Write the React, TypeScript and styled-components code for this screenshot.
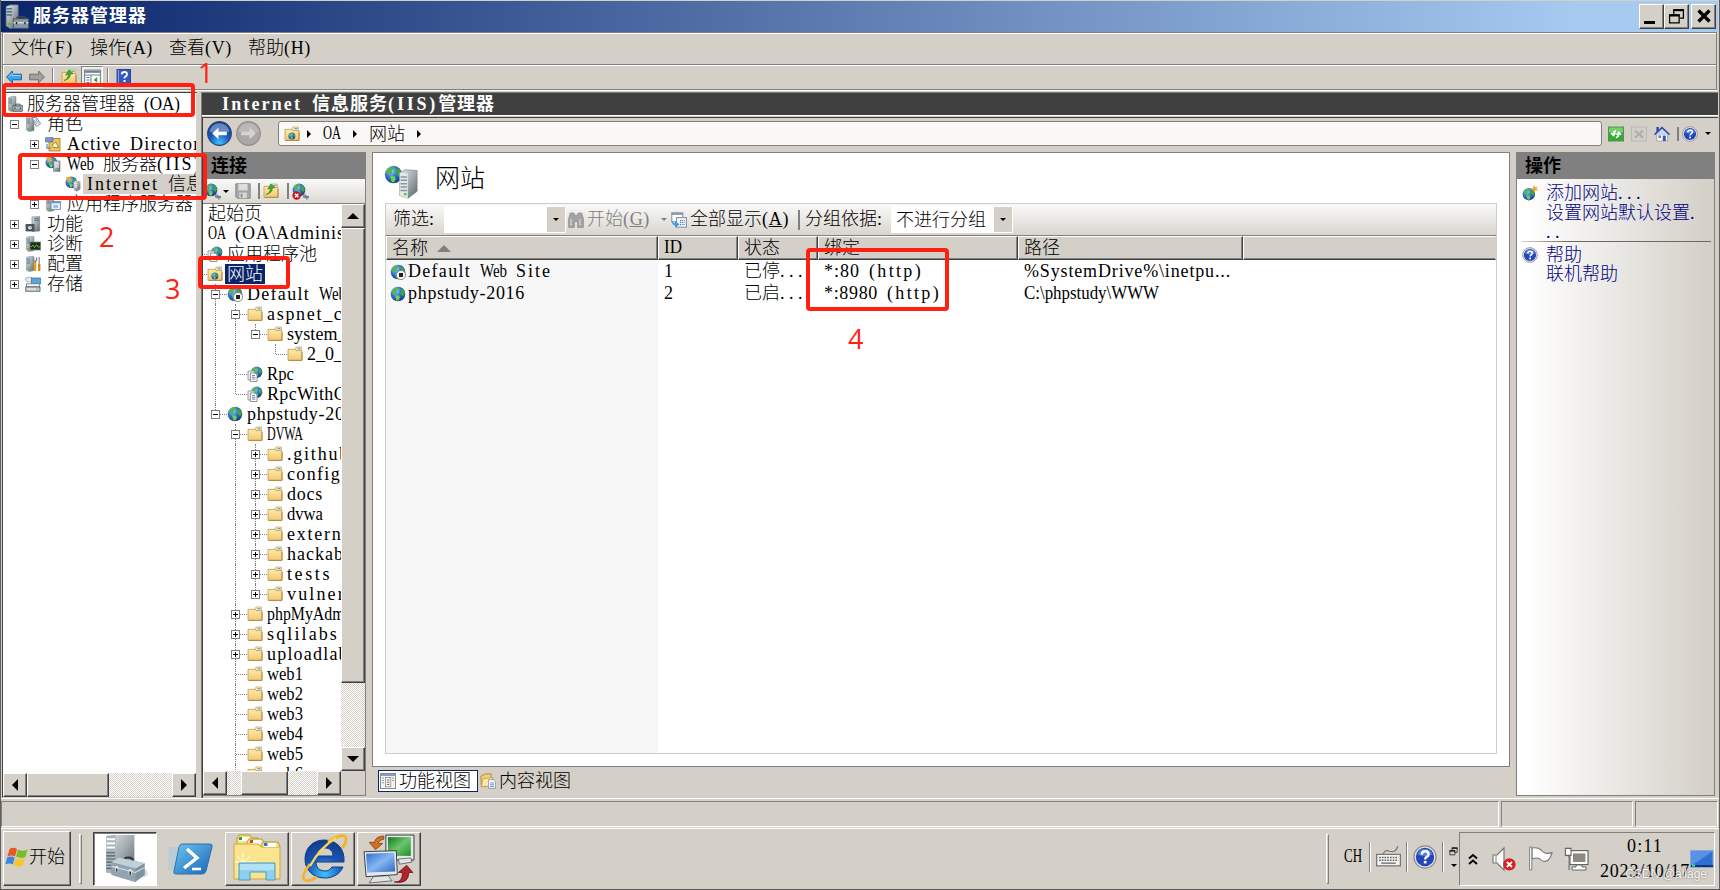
import React from "react";
import styled, { createGlobalStyle, css } from "styled-components";

const face = "#d4d0c8";
const shadow = "#808080";
const dark = "#404040";
const navy = "#0a246a";

const raised = css`
  background: ${face};
  border: 1px solid;
  border-color: #fff ${dark} ${dark} #fff;
  box-shadow: inset -1px -1px 0 ${shadow};
`;

/* ---------- text ---------- */

const ruler = document.createElement("canvas").getContext("2d")!;

// every latin letter gets a cell of half an em: narrow words are spaced out,
// wide ones are condensed
function fit(text: string, bold?: boolean): React.CSSProperties {
  ruler.font = `${bold ? 700 : 400} 100px "Liberation Serif"`;
  const natural = ruler.measureText(text).width / 100;
  const wanted = text.length * (bold ? 0.556 : 0.5);
  if (natural > wanted + 0.01) {
    return {
      display: "inline-block",
      letterSpacing: 0,
      transform: `scaleX(${(wanted / natural).toFixed(3)})`,
      marginRight: `${(wanted - natural).toFixed(3)}em`,
    };
  }
  return { letterSpacing: `${((wanted - natural) / text.length).toFixed(4)}em` };
}

function Txt({ children, bold }: { children: string; bold?: boolean }) {
  return (
    <Run>
      {children.split(/([\x21-\x7e]+| +)/).map((part, i) =>
        i % 2 ? (
          <Latin key={i} style={fit(part, bold)}>{part}</Latin>
        ) : (
          part
        )
      )}
    </Run>
  );
}

function Hotkey({ label, letter }: { label: string; letter: string }) {
  return (
    <Run>
      {label}
      <Latin style={fit(`(${letter})`)}>(<u>{letter}</u>)</Latin>
    </Run>
  );
}

const Run = styled.span`
  display: block;
  padding-bottom: 3px;
  line-height: 17px;
`;

const Latin = styled.span`
  font-family: "Liberation Serif", serif;
  transform-origin: 0 50%;
  white-space: pre;
`;

/* ---------- icons ---------- */

type IconProps = { size?: number };

const Svg = ({
  size = 16,
  box = 16,
  children,
}: IconProps & { box?: number; children: React.ReactNode }) => (
  <IconSvg width={size} height={size} viewBox={`0 0 ${box} ${box}`}>
    {children}
  </IconSvg>
);

const Defs = () => (
  <DefsSvg width="0" height="0">
    <defs>
      <radialGradient id="sea" cx="0.35" cy="0.3" r="0.8">
        <stop offset="0" stopColor="#a9d8fa" />
        <stop offset="0.45" stopColor="#2f74cf" />
        <stop offset="1" stopColor="#12327f" />
      </radialGradient>
      <linearGradient id="folder" x1="0" y1="0" x2="0" y2="1">
        <stop offset="0" stopColor="#ffeaa9" />
        <stop offset="1" stopColor="#efc873" />
      </linearGradient>
      <linearGradient id="steel" x1="0" y1="0" x2="1" y2="1">
        <stop offset="0" stopColor="#dfe5e8" />
        <stop offset="0.5" stopColor="#a3abb0" />
        <stop offset="1" stopColor="#59636a" />
      </linearGradient>
      <radialGradient id="orb" cx="0.5" cy="0.9" r="0.9">
        <stop offset="0" stopColor="#3fc3ff" />
        <stop offset="0.5" stopColor="#1b56b8" />
        <stop offset="1" stopColor="#123a86" />
      </radialGradient>
      <linearGradient id="screen" x1="0" y1="0" x2="1" y2="1">
        <stop offset="0" stopColor="#2f6dd0" />
        <stop offset="0.5" stopColor="#86b7f2" />
        <stop offset="1" stopColor="#2c67c4" />
      </linearGradient>
      <linearGradient id="green" x1="0" y1="0" x2="1" y2="1">
        <stop offset="0" stopColor="#0f7a1c" />
        <stop offset="0.5" stopColor="#6cc46d" />
        <stop offset="1" stopColor="#1f8f25" />
      </linearGradient>
      <linearGradient id="shell" x1="0" y1="0" x2="1" y2="1">
        <stop offset="0" stopColor="#6cc4ee" />
        <stop offset="1" stopColor="#1a66b8" />
      </linearGradient>
    </defs>
  </DefsSvg>
);

const EarthShape = () => (
  <>
    <circle cx="8" cy="8" r="7.3" fill="url(#sea)" />
    <path d="M2 5 Q4 1.6 8 1.2 L9 3 L6.5 4.5 L7 6.5 L4.5 8 L2.5 7.5 Z" fill="#4fb848" />
    <path d="M10 3 L13 3.4 L15 7 L13.5 10.5 L11.6 9 L10.2 7.6 L11 5.5 Z" fill="#3fa53c" />
    <path d="M5 9.5 L8.5 9.3 L10 11.3 L8.4 14.8 L6.3 14 Z" fill="#6fd04a" />
  </>
);

const Globe = ({ size }: IconProps) => (
  <Svg size={size}>
    <EarthShape />
  </Svg>
);

const GlobeStopped = ({ size }: IconProps) => (
  <Svg size={size}>
    <EarthShape />
    <circle cx="11" cy="11" r="4.6" fill="#f6f6f6" stroke="#777" strokeWidth="0.8" />
    <rect x="9" y="9" width="4" height="4" fill="#222" />
  </Svg>
);

const GlobeNew = () => (
  <Svg>
    <g transform="translate(0 2.4) scale(0.85)">
      <EarthShape />
    </g>
    <path d="M12 0 L13 2.2 L15.6 1.4 L14.4 3.6 L16 5.6 L13.4 5.4 L12 7.6 L11.2 5 L8.6 4.4 L10.8 3 Z" fill="#f6a623" />
  </Svg>
);

const GlobePlug = ({ stop }: { stop?: boolean }) => (
  <Svg size={17}>
    <path d="M9 9 L15 15" stroke="#9aa6ae" strokeWidth="3" />
    <path d="M10.5 13 H16" stroke="#6b7a84" strokeWidth="1.6" />
    <g transform="scale(0.82)">
      <EarthShape />
    </g>
    {stop && (
      <>
        <circle cx="4.4" cy="11.8" r="4" fill="#c4161c" />
        <path d="M2.8 10.2 L6 13.4 M6 10.2 L2.8 13.4" stroke="#fff" strokeWidth="1.4" />
      </>
    )}
  </Svg>
);

const FolderShape = () => (
  <>
    <path d="M8 2.6 L9 1 H14.4 V5 H8 Z" fill="#f6eac4" stroke="#b99650" strokeWidth="0.6" />
    <rect x="10.4" y="2" width="3" height="1.2" fill="#5aa5e6" />
    <path d="M1 3.4 H8 L9 4.6 H15 V14.4 H1 Z" fill="url(#folder)" stroke="#c39a4a" strokeWidth="0.8" />
    <path d="M15 6 V14.4 H2" stroke="#a8823a" strokeWidth="0.8" fill="none" />
  </>
);

const Folder = () => (
  <Svg>
    <FolderShape />
  </Svg>
);

const FolderGlobe = () => (
  <Svg>
    <FolderShape />
    <g transform="translate(4 6.2) scale(0.48)">
      <EarthShape />
    </g>
  </Svg>
);

const FolderUp = () => (
  <Svg>
    <FolderShape />
    <path d="M3 11.5 Q7.4 10 7.2 5 L4.6 6.2 L8 0.8 L12 4.6 L9.4 5 Q9.6 10 3 11.5 Z" fill="#43b02a" stroke="#1d6d12" strokeWidth="0.5" />
  </Svg>
);

const GlobePage = ({ pages }: { pages?: boolean }) => (
  <Svg>
    <g transform="translate(3.4 0) scale(0.78)">
      <EarthShape />
    </g>
    <path d="M1 5 H7.5 V14 H1 Z" fill="#f2f2f2" stroke="#888" strokeWidth="0.8" />
    <path d="M3.4 7 H8 L10 9 V15.5 H3.4 Z" fill="#fff" stroke="#777" strokeWidth="0.8" />
    {!pages && <path d="M5 9.5 H8 M5 11.3 H8.4 M5 13.1 H8.4" stroke="#3f6aa8" strokeWidth="0.8" />}
  </Svg>
);

const TowerShape = () => (
  <>
    <path d="M1.4 1.6 L4 0.6 H9 V14.6 L4 15.6 L1.4 14 Z" fill="url(#steel)" stroke="#7b858b" strokeWidth="0.5" />
    <path d="M1.8 3 H5 M1.8 5 H5 M1.8 7 H5" stroke="#4c6f86" strokeWidth="0.9" />
    <rect x="2.2" y="12" width="2" height="1.4" fill="#54c13c" />
  </>
);

const ServerBox = ({ size }: IconProps) => (
  <Svg size={size}>
    <TowerShape />
    <path d="M8 9.5 Q8 8 11 8 Q14 8 14 9.5" fill="none" stroke="#3c464c" strokeWidth="0.9" />
    <rect x="6" y="9.5" width="9.6" height="6" fill="#8d9aa3" stroke="#4e5a62" strokeWidth="0.6" />
    <path d="M6 12 H15.6" stroke="#d8e0e4" strokeWidth="0.8" />
    <path d="M8 11.5 V13 M13.4 11.5 V13" stroke="#222" strokeWidth="0.9" />
  </Svg>
);

const ServerPages = () => (
  <Svg>
    <TowerShape />
    <path d="M7 2.4 L11 1 L15.6 7.6 L11.5 10.5 Z" fill="#e9f0f6" stroke="#5d7182" strokeWidth="0.8" />
    <path d="M9.2 4 L12 8 M10.8 3.2 L13.6 7.2" stroke="#6f9cc4" strokeWidth="0.8" />
  </Svg>
);

const Directory = () => (
  <Svg>
    <rect x="4" y="2.5" width="11" height="12.5" fill="#f0c65a" stroke="#8b6a1e" strokeWidth="0.7" />
    <path d="M0.6 1.6 H8 V6 H0.6 Z" fill="#7f97c9" stroke="#405a94" strokeWidth="0.6" />
    <path d="M7 9 L11 6 L13.5 11.5 H8.6 Z" fill="#fff3c4" stroke="#6c5210" strokeWidth="0.6" />
    <path d="M2 8 V12 H6" stroke="#7a8aa6" strokeWidth="1.3" fill="none" />
  </Svg>
);

const ServerGlobe = ({ size }: IconProps) => (
  <Svg size={size}>
    <g transform="scale(0.56)">
      <EarthShape />
    </g>
    <path d="M7.4 3.6 L10 2.2 L15.6 2.6 V12.4 L11.4 15.6 L7.4 14.4 Z" fill="url(#steel)" stroke="#7b858b" strokeWidth="0.3" />
    <path d="M7.4 3.6 L11.2 4 V15.6 L7.4 14.4 Z" fill="#e3e7e9" />
    <path d="M7.8 5.6 H10.8 M7.8 7.2 H10.8 M7.8 8.8 H10.8 M7.8 10.4 H10.8 M7.8 12 H10.8" stroke="#8a959c" strokeWidth="0.7" />
    <rect x="9.4" y="13.2" width="1.2" height="1" fill="#44d02c" />
  </Svg>
);

const WebManager = () => (
  <Svg>
    <g transform="scale(0.8)">
      <EarthShape />
    </g>
    <path d="M1 1.5 L5 0.6 L7 5 L3 6 Z" fill="#e9a93a" />
    <path d="M8.6 6 L11 4.6 L15.4 5.4 V13 L12 15.6 L8.6 14 Z" fill="url(#steel)" />
    <path d="M9.4 7.4 H12 M9.4 9.2 H12 M9.4 11 H12" stroke="#fff" strokeWidth="0.9" />
  </Svg>
);

const WebServer = () => (
  <Svg>
    <g transform="scale(0.8)">
      <EarthShape />
    </g>
    <path d="M1 1.5 L5 0.6 L7 5 L3 6 Z" fill="#e9a93a" />
    <path d="M8.6 5 H15 V15.4 H8.6 Z" fill="url(#steel)" stroke="#68747b" strokeWidth="0.6" />
    <path d="M9.6 7 H14 M9.6 9 H14 M9.6 11 H14" stroke="#fff" strokeWidth="0.9" />
    <rect x="12" y="13" width="2" height="1.2" fill="#44d02c" />
  </Svg>
);

const AppServer = () => (
  <Svg>
    <TowerShape />
    <rect x="6" y="5.5" width="9.6" height="8" fill="#e9eef5" stroke="#6d86a5" strokeWidth="0.8" />
    <path d="M6 6.6 H15.6" stroke="#6d9bd0" strokeWidth="1.4" />
    <rect x="8.4" y="9" width="4.6" height="3" fill="#9ebfe4" />
  </Svg>
);

const Features = () => (
  <Svg>
    <path d="M7 1 L14.6 0.6 V15 L7 15.4 Z" fill="url(#steel)" stroke="#68747b" strokeWidth="0.6" />
    <path d="M9 2.6 H14 M9 4.4 H14" stroke="#4c6f86" strokeWidth="0.9" />
    <rect x="0.6" y="8" width="9" height="7.4" fill="#4d585f" />
    <circle cx="5" cy="11.7" r="2.4" fill="#fff" stroke="#222" strokeWidth="0.8" />
    <path d="M5 10.3 V11.8 H6.2" stroke="#222" strokeWidth="0.6" fill="none" />
  </Svg>
);

const Diagnostics = () => (
  <Svg>
    <TowerShape />
    <rect x="5" y="6" width="10.6" height="8" fill="#1c2b1c" stroke="#7b858b" strokeWidth="0.8" />
    <path d="M6 11 L8 9 L9.6 11.6 L11.6 8.6 L13 11 H15" stroke="#6de04c" strokeWidth="0.8" fill="none" />
  </Svg>
);

const Config = () => (
  <Svg>
    <TowerShape />
    <path d="M8.4 1.4 V4.4 L10 5.6 L11.6 4.4 V1.4" stroke="#7b858b" strokeWidth="1.3" fill="none" />
    <path d="M10 6 V15" stroke="#e89a1a" strokeWidth="2.6" />
    <path d="M14.2 1 V8" stroke="#7b858b" strokeWidth="1.1" />
    <path d="M14.2 8 V15" stroke="#d4881a" strokeWidth="2.4" />
  </Svg>
);

const Storage = () => (
  <Svg>
    <ellipse cx="4.4" cy="3.6" rx="3.8" ry="2.4" fill="#e8edf1" stroke="#7b858b" strokeWidth="0.6" />
    <rect x="6.4" y="2" width="9" height="6" fill="#58a6d8" stroke="#3a6e94" strokeWidth="0.7" />
    <rect x="1.4" y="7.8" width="13" height="3" fill="#f1f3f5" stroke="#68747b" strokeWidth="0.7" />
    <rect x="0.8" y="11" width="14.2" height="4.2" fill="#d7dce0" stroke="#3e474d" strokeWidth="0.8" />
    <rect x="11.4" y="12.4" width="2" height="1.2" fill="#44d02c" />
  </Svg>
);

const ArrowLeft = () => (
  <Svg>
    <path d="M0.6 8 L6.4 2 V5.2 H15.4 V10.8 H6.4 V14 Z" fill="#39a5ea" stroke="#155a9a" strokeWidth="0.9" />
    <path d="M3 7.6 L6 4.6 V6.6 H14.6" stroke="#a5dcfb" strokeWidth="0.9" fill="none" />
  </Svg>
);

const ArrowRight = () => (
  <Svg>
    <path d="M15.4 8 L9.6 2 V5.2 H0.6 V10.8 H9.6 V14 Z" fill="#a0a0a0" stroke="#6a6a6a" strokeWidth="0.9" />
  </Svg>
);

const ConsoleTree = () => (
  <Svg size={17}>
    <rect x="0.6" y="1" width="14.8" height="14" fill="#fff" stroke="#72808c" />
    <path d="M1 2.6 H15" stroke="#72808c" strokeWidth="2" />
    <path d="M1 5.6 H15 M6.6 6 V15" stroke="#72808c" />
    <path d="M2.4 8 H5 M2.4 10.4 H5 M2.4 12.8 H5" stroke="#3c70b8" />
    <path d="M12.4 7.6 V13 L9 10.3 Z" fill="#35a52c" />
  </Svg>
);

const HelpBook = () => (
  <Svg>
    <rect x="1" y="0.5" width="13.5" height="15" fill="#3557c0" stroke="#1c2f7c" strokeWidth="0.8" />
    <path d="M2.4 1 V15" stroke="#8fa8ee" />
    <path d="M5.6 5.4 Q5.8 3 8.4 3 Q11 3 11 5.2 Q11 6.8 9.4 7.6 Q8.4 8.2 8.4 9.6" fill="none" stroke="#fff" strokeWidth="1.8" />
    <rect x="7.5" y="11" width="2" height="2" fill="#fff" />
  </Svg>
);

const HelpCircle = ({ size }: IconProps) => (
  <Svg size={size}>
    <circle cx="8" cy="8" r="7.4" fill="#e2e2e6" stroke="#8c8c94" strokeWidth="0.8" />
    <circle cx="8" cy="8" r="6.1" fill="#2347b8" />
    <path d="M3 6.4 A5.2 5.2 0 0 1 13 6.4 Q8 8.6 3 6.4 Z" fill="#7094e6" opacity="0.7" />
    <path d="M5.8 6.4 Q5.9 4.2 8.1 4.2 Q10.4 4.2 10.4 6.1 Q10.4 7.4 9 8 Q8.1 8.5 8.1 9.6" fill="none" stroke="#fff" strokeWidth="1.6" />
    <rect x="7.2" y="10.6" width="1.8" height="1.7" fill="#fff" />
  </Svg>
);

const NavOrb = ({ forward }: { forward?: boolean }) => (
  <Svg size={25} box={24}>
    <circle cx="12" cy="12" r="11.4" fill={forward ? "#a9a8a5" : "url(#orb)"} stroke={forward ? "#8d8c89" : "#2c4472"} />
    <path d="M2.4 10 A9.8 9.8 0 0 1 21.6 10 Q12 13 2.4 10 Z" fill="#fff" opacity={forward ? 0.2 : 0.35} />
    <path
      d="M5 12 L11 6.4 V10.4 H19 V13.6 H11 V17.6 Z"
      fill={forward ? "#d6d4d0" : "#fff"}
      transform={forward ? "rotate(180 12 12)" : undefined}
    />
  </Svg>
);

const Refresh = () => (
  <Svg>
    <rect x="0.5" y="1" width="15" height="14" fill="#2dae2f" stroke="#5c8a5c" />
    <rect x="1" y="1.5" width="14" height="5" fill="#8be07f" opacity="0.7" />
    <path d="M3 7 L5.4 9.6 L7.6 7 M5.3 9 Q5 5.6 8 4.8 M8.4 8.8 L10.8 6.2 L13 8.8 M10.7 7 Q11 11 7.8 11.6" stroke="#fff" strokeWidth="1.6" fill="none" />
  </Svg>
);

const StopLoad = () => (
  <Svg>
    <rect x="0.5" y="1" width="15" height="14" fill="#d0cecb" stroke="#b9b7b3" />
    <path d="M4 4.6 L12 11.8 M12 4.6 L4 11.8" stroke="#b0aeab" strokeWidth="2.2" />
  </Svg>
);

const Home = () => (
  <Svg>
    <rect x="2.4" y="1" width="2.4" height="5" fill="#2d49a6" />
    <path d="M2.6 8 H13.6 V15 H2.6 Z" fill="#f5f5f7" stroke="#8a90a8" strokeWidth="0.7" />
    <path d="M0.6 8.6 L8 1.6 L15.6 8.6" fill="#c9d4f2" stroke="#33499e" strokeWidth="1.5" />
    <rect x="8.8" y="9.6" width="3" height="5.4" fill="#2e5db0" />
    <rect x="4.4" y="9.4" width="2.6" height="2.6" fill="#7b8190" />
  </Svg>
);

const Disk = () => (
  <Svg>
    <path d="M0.8 0.8 H15.2 V15.2 H2.2 L0.8 13.8 Z" fill="#a5a5a5" stroke="#8a8a8a" />
    <rect x="3.4" y="1" width="9.2" height="6.4" fill="#dedede" />
    <rect x="4.4" y="9.6" width="7.4" height="5.4" fill="#dadada" />
    <rect x="5.6" y="10.8" width="2" height="3.6" fill="#8e8e8e" />
  </Svg>
);

const Binoculars = () => (
  <Svg>
    <path d="M0.6 7 L2.2 1 H6 L7 3.6 H9 L10 1 H13.8 L15.4 7 V15.4 H9.6 V9.4 H6.4 V15.4 H0.6 Z" fill="#a3a3a3" stroke="#8a8a8a" strokeWidth="0.7" />
    <path d="M3 7 V13.6 M12 7 V13.6" stroke="#d0d0d0" strokeWidth="1.4" />
  </Svg>
);

const ShowAll = () => (
  <Svg>
    <rect x="0.8" y="0.8" width="11" height="9" fill="#fff" stroke="#7d8ba0" />
    <path d="M0.8 2 H11.8" stroke="#7d8ba0" strokeWidth="1.6" />
    <rect x="5.4" y="5.6" width="10" height="9.6" fill="#f4f8fd" stroke="#7d8ba0" />
    <path d="M9 8.6 H14 M9 10.6 H14 M9 12.6 H14" stroke="#3c62a8" strokeDasharray="1.2 1" />
    <path d="M1 7 Q1 11.4 4 11.4 V9 L8.6 12.4 L4 15.4 V13.4 Q0 13 1 7 Z" fill="#2f9fe0" />
  </Svg>
);

const FeatureView = () => (
  <Svg>
    <rect x="0.5" y="0.5" width="15" height="15" fill="#f4f4f2" stroke="#8a8a8a" />
    <path d="M1 2 H15" stroke="#8ca0bc" strokeWidth="2" />
    <path d="M2 5 H4 M2 7.4 H4 M2 9.8 H4 M12 5 H14 M12 7.4 H14" stroke="#9a9a9a" />
    <rect x="5.4" y="4.4" width="5.4" height="9.4" fill="#fff" stroke="#8a8a8a" strokeWidth="0.8" />
    <path d="M6.8 7 H9.6 M6.8 9.2 H9.6 M6.8 11.4 H9.6" stroke="#444" strokeWidth="0.8" />
  </Svg>
);

const ContentView = () => (
  <Svg>
    <path d="M0.8 3 L6 0.8 H11 V4 L13 5 L10.6 13.6 H1.4 Z" fill="#efcb7c" stroke="#a98133" strokeWidth="0.8" />
    <path d="M3 6 L13 4.4 L11 13.4 H1.4 Z" fill="#ffe6a3" stroke="#b78f3e" strokeWidth="0.6" />
    <path d="M8.6 6.6 H13.4 L15.4 8.6 V15.4 H8.6 Z" fill="#fff" stroke="#7d8ba0" strokeWidth="0.8" />
    <path d="M10 10 H14 M10 11.8 H14 M10 13.6 H14" stroke="#3a75c4" strokeWidth="0.8" />
  </Svg>
);

const WindowsFlag = () => (
  <Svg size={24} box={24}>
    <path d="M4.4 4.2 Q8 1.4 12 4 L10 11.4 Q6.4 9.4 2.4 11.6 Z" fill="#e8562a" />
    <path d="M13 4.6 Q17.4 7 22.6 4.4 L20.4 12 Q15.6 14 11 11.6 Z" fill="#7cbc2c" />
    <path d="M2 12.6 Q6 10.6 9.8 12.6 L7.8 19.6 Q4 17.6 0.4 19.6 Z" fill="#3f86d8" />
    <path d="M10.8 13 Q15.4 15.4 20 13.2 L18 20.4 Q13.4 22.8 8.8 20.2 Z" fill="#f8c52c" />
  </Svg>
);

const ToolboxLarge = () => (
  <Svg size={50} box={48}>
    <path d="M37 42 Q48 42 45 35 L39 32 Z" fill="#d8d8d8" />
    <path d="M6 2 L14 1 H33 V32 L16 38 L6 37 Z" fill="url(#steel)" />
    <path d="M6 2 L15 1 V38 L6 37 Z" fill="#a6b3bb" />
    <path d="M6.5 5 H14.5 M6.5 9 H14.5 M6.5 13 H14.5" stroke="#fff" strokeWidth="2" />
    <path d="M6 18 H14.5 M6 21 H14.5 M6 24 H14.5 M6 27 H14.5 M6 30 H14.5 M6 33 H14.5" stroke="#56636b" />
    <path d="M22 27 Q23 22 28 22.6 Q32 23 32 27" fill="none" stroke="#333" strokeWidth="1.8" />
    <path d="M11 27 L18 22.6 L43 28 V39 L34 46 L11 39 Z" fill="#7e929f" />
    <path d="M11 27 L18 22.6 L43 28 L34 33 Z" fill="#c3d0d8" />
    <path d="M11 27 L34 33 V46 L11 39 Z" fill="#91a4b0" />
    <path d="M11 31 L34 37 L43 32" stroke="#dbe4ea" fill="none" />
    <path d="M16 31 V36 M29 34 V39" stroke="#e8edf0" strokeWidth="3" />
    <path d="M16 33 V36 M29 36 V39" stroke="#333" strokeWidth="1.6" />
  </Svg>
);

const PowerShell = () => (
  <Svg size={46} box={46}>
    <path d="M1 11 H10 L5 34 H0 Z" fill="#8ec8ea" opacity="0.4" />
    <path d="M14 8 H42 Q45 8 44 11 L38 35 Q37 38 34 38 H8 Q5 38 6 35 L11 11 Q12 8 14 8 Z" fill="url(#shell)" stroke="#2c70aa" />
    <path d="M19 13 L29 22 L16 32" fill="none" stroke="#fff" strokeWidth="3.4" />
    <path d="M24 33 H33" stroke="#fff" strokeWidth="2.6" />
  </Svg>
);

const Explorer = () => (
  <Svg size={50} box={50}>
    <path d="M5 4 L7 1 H18 L20 4 H26 V20 H5 Z" fill="#f6e08c" stroke="#b99a3c" />
    <rect x="7" y="3" width="10" height="4" fill="#fff" />
    <rect x="7" y="3" width="3" height="3" fill="#29a23a" />
    <path d="M15 8 L17 5 H30 L32 8 H38 V20 H15 Z" fill="#f6e08c" stroke="#b99a3c" />
    <rect x="18" y="6" width="11" height="4" fill="#fff" />
    <rect x="18" y="6" width="3" height="3" fill="#d9481c" />
    <path d="M2 10 H26 L29 13 H48 V45 H2 Z" fill="#fbe48e" stroke="#c8a748" />
    <path d="M29 12 L31 8 H46 L48 13" fill="#f6e08c" stroke="#b99a3c" />
    <rect x="32" y="9" width="12" height="4" fill="#fff" />
    <rect x="32" y="9" width="3.5" height="3" fill="#2b76cc" />
    <path d="M11 17 V40 M3 28 H24 M5 22 L18 35 M18 22 L5 35" stroke="#fffbe0" strokeWidth="1" />
    <path d="M7 29 H43 V46 H34 V38 H18 V46 H7 Z" fill="#8fd0ee" stroke="#4b9cc8" />
    <path d="M8 30 H42 V36 H8 Z" fill="#bfe8f8" opacity="0.7" />
  </Svg>
);

const IE = () => (
  <Svg size={50} box={50}>
    <path
      d="M26 6 C15 6 7 14 7 25 C7 37 16 44 27 44 C35 44 42 40 45 33 H34 C32 36 30 37 27 37 C21 37 18 33 18 28 H46 C47 15 39 6 26 6 Z M18 22 C19 17 22 14 27 14 C32 14 35 17 35 22 Z"
      fill="url(#orb)"
      fillRule="evenodd"
      stroke="#0c3f8c"
      strokeWidth="1"
    />
    <path d="M12 30 C1 44 4 52 19 43 M30 8 C40 1 49 -1 48 6 C48 9 46 12 44 14" fill="none" stroke="#f3b42c" strokeWidth="2.8" />
    <path d="M12 32 C17 23 26 11 38 4" fill="none" stroke="#f9d460" strokeWidth="2.4" />
  </Svg>
);

const Monitors = () => (
  <Svg size={52} box={50}>
    <path d="M22 2 H49 V26 H22 Z" fill="#e4e9ee" stroke="#222" strokeWidth="0.8" />
    <path d="M24 4 H46 V22 H24 Z" fill="url(#green)" />
    <path d="M34 25 L46 24 L47 28 L35 30 Z" fill="#dfe4e8" stroke="#333" strokeWidth="0.6" />
    <path d="M1 18 L32 17 L33 40 L3 42 Z" fill="#e4e9ee" stroke="#222" strokeWidth="0.8" />
    <path d="M3 20 L30 19 L31 37 L4 38 Z" fill="url(#screen)" />
    <path d="M10 42 L24 41 L28 46 L6 48 Z" fill="#dfe4e8" stroke="#333" strokeWidth="0.6" />
    <path d="M20 3 Q12 3 11 9 H6 L12 16 L19 10 H15 Q15 7 20 6 Z" fill="#d46f22" stroke="#7a3b0c" strokeWidth="0.7" />
    <path d="M30 47 Q38 48 38 38 H34 L42 31 L48 38 H44 Q44 50 30 47 Z" fill="#b0242c" stroke="#5e0c12" strokeWidth="0.7" />
  </Svg>
);

const Keyboard = () => (
  <Svg size={25} box={24}>
    <path d="M7 9 Q8 4 13 6 Q19 8 21 1" fill="none" stroke="#777" strokeWidth="1.2" />
    <rect x="0.6" y="9" width="22.8" height="11" fill="#f2f2f0" stroke="#777" strokeWidth="1.2" />
    <path d="M3 12 H21.4 M3 14.6 H21.4" stroke="#666" strokeWidth="1.5" strokeDasharray="1.6 1" />
    <path d="M5 17.4 H19" stroke="#666" strokeWidth="1.2" />
  </Svg>
);

const Speaker = () => (
  <Svg size={26} box={26}>
    <path d="M2 9 H6 L13 2 V24 L6 17 H2 Z" fill="#fafafa" stroke="#777" strokeWidth="1.2" />
    <path d="M5 9 V17" stroke="#888" />
    <circle cx="18.4" cy="18.4" r="6.2" fill="#d81e1e" />
    <path d="M15.8 15.8 L21 21 M21 15.8 L15.8 21" stroke="#fff" strokeWidth="1.9" />
  </Svg>
);

const Flag = () => (
  <Svg size={25} box={25}>
    <path d="M4 2 Q10 1 13 4 Q17 9 24 6.6 Q23 11 20 14.4 Q15 17 12 13 Q8 11 4 13 Z" fill="#fff" stroke="#777" strokeWidth="1.2" />
    <path d="M1.6 1 H3.8 V24 H1.6 Z" fill="#fff" stroke="#777" strokeWidth="0.9" />
  </Svg>
);

const Network = () => (
  <Svg size={25} box={25}>
    <rect x="6" y="4.6" width="18" height="14" fill="#fff" stroke="#666" strokeWidth="1.2" />
    <rect x="9" y="7.4" width="12.4" height="8.6" fill="#8d8a82" />
    <path d="M12 19 H18 V21 H22 V24 H8 V21 H12 Z" fill="#fff" stroke="#666" strokeWidth="1" />
    <path d="M1.4 2.4 H7 V9.4 H1.4 Z M3.4 10 H5 V24" fill="#fff" stroke="#666" strokeWidth="1.1" />
  </Svg>
);

const ShowDesktop = () => (
  <Svg size={24} box={24}>
    <rect x="0.5" y="3.5" width="22.5" height="17" fill="#2d6fd2" stroke="#7ea9e4" />
    <path d="M1 4 H23 L1 19 Z" fill="#8dbcf5" opacity="0.45" />
    <path d="M1 19 H23" stroke="#16376e" strokeWidth="2" />
    <rect x="2" y="17.6" width="3" height="2" fill="#5ee05e" />
  </Svg>
);

const Restore = ({ size = 16 }: IconProps) => (
  <Svg size={size}>
    <path d="M5.5 6 V1.5 H14.5 V9.5 H11" fill="none" stroke="#000" strokeWidth="1.2" />
    <path d="M5 2 H15" stroke="#000" strokeWidth="2" />
    <path d="M1.5 6.5 H10.5 V14 H1.5 Z" fill={face} stroke="#000" strokeWidth="1.2" />
    <path d="M1 7 H11" stroke="#000" strokeWidth="2" />
  </Svg>
);

/* ---------- data ---------- */

type ServerNode = {
  label: string;
  depth: number;
  icon: React.ReactNode;
  box?: "+" | "-";
  selected?: boolean;
};

const serverTree: ServerNode[] = [
  { label: "角色", depth: 0, icon: <ServerPages />, box: "-" },
  { label: "Active Directory", depth: 1, icon: <Directory />, box: "+" },
  { label: "Web 服务器(IIS)", depth: 1, icon: <WebServer />, box: "-" },
  { label: "Internet 信息服务", depth: 2, icon: <WebManager />, selected: true },
  { label: "应用程序服务器", depth: 1, icon: <AppServer />, box: "+" },
  { label: "功能", depth: 0, icon: <Features />, box: "+" },
  { label: "诊断", depth: 0, icon: <Diagnostics />, box: "+" },
  { label: "配置", depth: 0, icon: <Config />, box: "+" },
  { label: "存储", depth: 0, icon: <Storage />, box: "+" },
];

// guides: one character per indent cell ("|" line, "t" branch, "l" last branch)
type SiteNode = { label: string; guides: string; box?: "+" | "-"; icon?: React.ReactNode };

const siteTree: SiteNode[] = [
  { label: "Default Web Site", guides: "t", box: "-", icon: <GlobeStopped /> },
  { label: "aspnet_client", guides: "|t", box: "-" },
  { label: "system_web", guides: "||l", box: "-" },
  { label: "2_0_50727", guides: "|| l" },
  { label: "Rpc", guides: "|t", icon: <GlobePage /> },
  { label: "RpcWithCert", guides: "|l", icon: <GlobePage /> },
  { label: "phpstudy-2016", guides: "l", box: "-", icon: <Globe /> },
  { label: "DVWA", guides: " t", box: "-" },
  { label: ".github", guides: " |t", box: "+" },
  { label: "config", guides: " |t", box: "+" },
  { label: "docs", guides: " |t", box: "+" },
  { label: "dvwa", guides: " |t", box: "+" },
  { label: "external", guides: " |t", box: "+" },
  { label: "hackable", guides: " |t", box: "+" },
  { label: "tests", guides: " |t", box: "+" },
  { label: "vulnerabilities", guides: " |l", box: "+" },
  { label: "phpMyAdmin", guides: " t", box: "+" },
  { label: "sqlilabs", guides: " t", box: "+" },
  { label: "uploadlabs", guides: " t", box: "+" },
  { label: "web1", guides: " t" },
  { label: "web2", guides: " t" },
  { label: "web3", guides: " t" },
  { label: "web4", guides: " t" },
  { label: "web5", guides: " t" },
  { label: "web6", guides: " t" },
];

const sites = [
  { name: "Default Web Site", id: "1", state: "已停...", binding: "*:80 (http)", path: "%SystemDrive%\\inetpu...", icon: <GlobeStopped /> },
  { name: "phpstudy-2016", id: "2", state: "已启...", binding: "*:8980 (http)", path: "C:\\phpstudy\\WWW", icon: <Globe /> },
];

const marks = [
  { x: 2, y: 83, w: 193, h: 34 },
  { x: 18, y: 153, w: 189, h: 47 },
  { x: 198, y: 256, w: 92, h: 33 },
  { x: 806, y: 248, w: 143, h: 63 },
];

const steps = [
  { n: "1", x: 198, y: 55 },
  { n: "2", x: 99, y: 219 },
  { n: "3", x: 165, y: 271 },
  { n: "4", x: 848, y: 321 },
];

/* ---------- page ---------- */

export default function App() {
  return (
    <Screen>
      <GlobalStyle />
      <Defs />
      <TitleBar>
        <ServerBox size={25} />
        <Title><Txt>服务器管理器</Txt></Title>
        <WinButton><MinGlyph /></WinButton>
        <WinButton><Restore size={17} /></WinButton>
        <CloseButton>
          <Svg size={14} box={14}>
            <path d="M1.5 1.5 L12.5 12.5 M12.5 1.5 L1.5 12.5" stroke="#000" strokeWidth="3.2" />
          </Svg>
        </CloseButton>
      </TitleBar>
      <MenuBar>
        {["文件(F)", "操作(A)", "查看(V)", "帮助(H)"].map((m) => (
          <Txt key={m}>{m}</Txt>
        ))}
      </MenuBar>
      <ToolBar>
        <ArrowLeft />
        <ArrowRight />
        <ToolSep />
        <FolderUp />
        <PressedTool><ConsoleTree /></PressedTool>
        <ToolSep />
        <HelpBook />
      </ToolBar>
      <Main>
        <ServerPane />
        <IISPane>
          <Banner><Txt bold>Internet 信息服务(IIS)管理器</Txt></Banner>
          <NavBar />
          <Columns>
            <Connections />
            <SitesView />
            <Actions />
          </Columns>
        </IISPane>
      </Main>
      <StatusBar>
        <StatusCell />
        <StatusCell $width={132} />
        <StatusCell $width={83} />
      </StatusBar>
      <Taskbar />
      {marks.map((m) => (
        <Mark key={m.y} $x={m.x} $y={m.y} $w={m.w} $h={m.h} />
      ))}
      {steps.map((s) => (
        <Step key={s.n} $x={s.x} $y={s.y}>{s.n}</Step>
      ))}
    </Screen>
  );
}

function ServerPane() {
  return (
    <ServerPaneBox>
      <ServerRows>
        <RootRow>
          <ServerBox />
          <NodeLabel><Txt>服务器管理器 (OA)</Txt></NodeLabel>
        </RootRow>
        {serverTree.map((n) => (
          <ServerRow key={n.label} $depth={n.depth}>
            {n.box ? <Expander>{n.box === "+" && <Plus />}</Expander> : <NoExpander />}
            {n.icon}
            <NodeLabel $selected={n.selected}><Txt>{n.label}</Txt></NodeLabel>
          </ServerRow>
        ))}
      </ServerRows>
      <HScroll>
        <ScrollButton><Arrow $dir="left" /></ScrollButton>
        <HThumb $width={82} />
        <Track />
        <ScrollButton><Arrow $dir="right" /></ScrollButton>
      </HScroll>
    </ServerPaneBox>
  );
}

function NavBar() {
  return (
    <NavRow>
      <NavOrb />
      <NavOrb forward />
      <Address>
        <FolderGlobe />
        <Crumb />
        <Txt>OA</Txt>
        <Crumb />
        <Txt>网站</Txt>
        <Crumb />
      </Address>
      <NavTools>
        <Refresh />
        <StopLoad />
        <Home />
        <NavHelp>
          <Divider $height={14} />
          <HelpCircle />
          <Caret />
        </NavHelp>
      </NavTools>
    </NavRow>
  );
}

function Connections() {
  return (
    <ConnBox>
      <PanelHead><Txt>连接</Txt></PanelHead>
      <ConnTools>
        <GlobePlug />
        <ToolCaret />
        <ConnGap $width={6} />
        <Disk />
        <ConnGap $width={7} />
        <Divider $height={16} />
        <ConnGap $width={3} />
        <FolderUp />
        <ConnGap $width={8} />
        <Divider $height={16} />
        <ConnGap $width={3} />
        <GlobePlug stop />
      </ConnTools>
      <ConnBody>
        <ConnRows>
          <SiteRow><PlainLabel><Txt>起始页</Txt></PlainLabel></SiteRow>
          <SiteRow><PlainLabel><Txt>OA (OA\Administrator)</Txt></PlainLabel></SiteRow>
          <SiteRow><Stub /><GlobePage pages /><TopLabel><Txt>应用程序池</Txt></TopLabel></SiteRow>
          <SiteRow><Stub /><FolderGlobe /><TopLabel $active><Txt>网站</Txt></TopLabel></SiteRow>
          {siteTree.map((n) => (
            <SiteRow key={n.label}>
              <GuidePad />
              {n.guides.split("").map((g, i) => (
                <Guide key={i} $kind={g}>
                  {n.box && i === n.guides.length - 1 && (
                    <Expander>{n.box === "+" && <Plus />}</Expander>
                  )}
                </Guide>
              ))}
              <NodeIcon>{n.icon || <Folder />}</NodeIcon>
              <NodeLabel><Txt>{n.label}</Txt></NodeLabel>
            </SiteRow>
          ))}
        </ConnRows>
        <VScroll>
          <ScrollButton><Arrow $dir="up" /></ScrollButton>
          <VThumb />
          <Track />
          <ScrollButton><Arrow $dir="down" /></ScrollButton>
        </VScroll>
      </ConnBody>
      <HScroll>
        <ScrollButton><Arrow $dir="left" /></ScrollButton>
        <Track />
        <HThumb $width={47} />
        <Track $grow={2} />
        <ScrollButton><Arrow $dir="right" /></ScrollButton>
        <Corner />
      </HScroll>
    </ConnBox>
  );
}

function SitesView() {
  return (
    <Center>
      <Content>
        <PageTitle>
          <ServerGlobe size={34} />
          <h1>网站</h1>
        </PageTitle>
        <ListBox>
          <FilterBar>
            <Txt>筛选:</Txt>
            <Combo $left={6}><ComboArrow><Caret /></ComboArrow></Combo>
            <FilterItem $disabled>
              <Binoculars />
              <Hotkey label="开始" letter="G" />
            </FilterItem>
            <DimCaret />
            <FilterItem>
              <ShowAll />
              <Hotkey label="全部显示" letter="A" />
            </FilterItem>
            <GroupSep />
            <Txt>分组依据:</Txt>
            <Combo $left={5}><Txt>不进行分组</Txt><ComboArrow><Caret /></ComboArrow></Combo>
          </FilterBar>
          <HeaderRow>
            <HeadCell><Txt>名称</Txt><SortUp /></HeadCell>
            <HeadCell><Txt>ID</Txt></HeadCell>
            <HeadCell><Txt>状态</Txt></HeadCell>
            <HeadCell><Txt>绑定</Txt></HeadCell>
            <HeadCell><Txt>路径</Txt></HeadCell>
            <HeadCell />
          </HeaderRow>
          <ListBody>
            {sites.map((s) => (
              <DataRow key={s.id}>
                <NameCell>{s.icon}<Txt>{s.name}</Txt></NameCell>
                <Cell><Txt>{s.id}</Txt></Cell>
                <Cell><Txt>{s.state}</Txt></Cell>
                <Cell><Txt>{s.binding}</Txt></Cell>
                <Cell><Txt>{s.path}</Txt></Cell>
              </DataRow>
            ))}
          </ListBody>
        </ListBox>
      </Content>
      <Tabs>
        <Tab $active><FeatureView /><Txt>功能视图</Txt></Tab>
        <Tab><ContentView /><Txt>内容视图</Txt></Tab>
      </Tabs>
    </Center>
  );
}

function Actions() {
  return (
    <ActionBox>
      <PanelHead><Txt>操作</Txt></PanelHead>
      <ActionBody>
        <ActionGroup>
          <GlobeNew />
          <div>
            <ActionLink><Txt>添加网站...</Txt></ActionLink>
            <ActionLink><Txt>设置网站默认设置.</Txt></ActionLink>
            <ActionLink><Txt>..</Txt></ActionLink>
          </div>
        </ActionGroup>
        <ActionRule />
        <ActionGroup>
          <HelpCircle />
          <div>
            <ActionLink><Txt>帮助</Txt></ActionLink>
            <ActionLink><Txt>联机帮助</Txt></ActionLink>
          </div>
        </ActionGroup>
      </ActionBody>
    </ActionBox>
  );
}

function Taskbar() {
  return (
    <TaskRow>
      <StartButton><WindowsFlag /><Txt>开始</Txt></StartButton>
      <Grip />
      <TaskButtons>
        <TaskButton $look="pressed"><ToolboxLarge /></TaskButton>
        <TaskButton $look="flat"><PowerShell /></TaskButton>
        <TaskButton><Explorer /></TaskButton>
        <TaskButton><IE /></TaskButton>
        <TaskButton><Monitors /></TaskButton>
      </TaskButtons>
      <Grip />
      <LangBar>
        <Txt>CH</Txt>
        <TraySep />
        <Keyboard />
        <TraySep />
        <HelpCircle size={24} />
        <TraySep />
        <LangOptions><Restore size={9} /><Caret /></LangOptions>
      </LangBar>
      <Tray>
        <Svg size={12} box={12}>
          <path d="M2 5.5 L6 2 L10 5.5 M2 11 L6 7.5 L10 11" fill="none" stroke="#000" strokeWidth="1.9" />
        </Svg>
        <TrayIcons><Speaker /><Flag /><Network /></TrayIcons>
        <Clock>
          <Txt>0:11</Txt>
          <Txt>2023/10/17</Txt>
        </Clock>
        <ShowDesktop />
      </Tray>
      <Watermark>CSDN @allage</Watermark>
    </TaskRow>
  );
}

/* ---------- styles ---------- */

const GlobalStyle = createGlobalStyle`
  * { box-sizing: border-box; }
  body {
    margin: 0;
    background: ${face};
    color: #000;
    font-family: "Noto Sans CJK SC", sans-serif;
    font-size: 18px;
    font-weight: 300;
    line-height: 20px;
  }
`;

const IconSvg = styled.svg`
  display: block;
  flex-shrink: 0;
`;

const DefsSvg = styled.svg`
  position: absolute;
`;

const Screen = styled.div`
  position: relative;
  width: 1720px;
  height: 890px;
  overflow: hidden;
  display: flex;
  flex-direction: column;
  background: ${face};
  border: solid #5f5f5f;
  border-width: 0 1px 1px;
  white-space: nowrap;
`;

const TitleBar = styled.div`
  height: 31px;
  margin-top: 1px;
  margin-right: 1px;
  display: flex;
  align-items: center;
  padding: 0 2px 1px 3px;
  background: linear-gradient(90deg, ${navy}, #a6caf0 92%);
  flex-shrink: 0;
`;

const Title = styled.div`
  flex: 1;
  padding-left: 4px;
  color: #fff;
  font-weight: 700;
  letter-spacing: 1px;
`;

const WinButton = styled.div`
  ${raised}
  width: 25px;
  height: 25px;
  display: flex;
  align-items: center;
  justify-content: center;
`;

const CloseButton = styled(WinButton)`
  margin-left: 2px;
`;

const MinGlyph = styled.i`
  width: 11px;
  height: 3px;
  margin: 13px 4px 0 0;
  background: #000;
`;

const MenuBar = styled.div`
  height: 33px;
  margin: 0 2px 0 1px;
  flex-shrink: 0;
  display: flex;
  align-items: center;
  gap: 16px;
  padding: 1px 0 0 8px;
  border: 1px solid ${shadow};
  box-shadow: inset 1px 1px 0 #fff;
`;

const ToolBar = styled.div`
  height: 25px;
  margin: 0 2px 0 1px;
  flex-shrink: 0;
  display: flex;
  align-items: center;
  gap: 7px;
  padding-left: 3px;
  border: solid ${shadow};
  border-width: 0 1px 1px;
  box-shadow: inset 1px 1px 0 #fff, 0 1px 0 #fff;
`;

const ToolSep = styled.i`
  width: 2px;
  height: 18px;
  background: ${shadow};
  border-right: 1px solid #fff;
`;

const PressedTool = styled.div`
  width: 22px;
  height: 22px;
  margin: 0 -3px;
  display: flex;
  align-items: center;
  justify-content: center;
  background: #efedea;
  border: 1px solid;
  border-color: ${shadow} #fff #fff ${shadow};
`;

const Main = styled.div`
  height: 709px;
  flex-shrink: 0;
  display: flex;
  padding: 2px 1px 0;
  border-bottom: 1px solid #fff;
`;

const ServerPaneBox = styled.div`
  width: 195px;
  height: 706px;
  display: flex;
  flex-direction: column;
  flex-shrink: 0;
  background: #fff;
  border: 1px solid;
  border-color: ${dark} ${face} ${face} ${dark};
`;

const ServerRows = styled.div`
  flex: 1;
  overflow: hidden;
  padding-top: 1px;
`;

const RootRow = styled.div`
  display: flex;
  align-items: center;
  height: 20px;
  padding-left: 4px;
`;

const ServerRow = styled.div<{ $depth: number }>`
  display: flex;
  align-items: center;
  height: 20px;
  padding-left: ${(p) => 7 + p.$depth * 20}px;

  > svg {
    margin: 0 2px 0 6px;
  }
`;

const NodeLabel = styled.span<{ $selected?: boolean }>`
  height: 20px;
  padding: 0 2px 0 4px;
  background: ${(p) => (p.$selected ? face : "transparent")};
`;

const Expander = styled.i`
  position: relative;
  z-index: 1;
  width: 9px;
  height: 9px;
  flex-shrink: 0;
  display: flex;
  align-items: center;
  justify-content: center;
  border: 1px solid ${shadow};
  background: linear-gradient(#000, #000) center / 5px 1px no-repeat #fff;
`;

const Plus = styled.i`
  width: 1px;
  height: 5px;
  background: #000;
`;

const NoExpander = styled.i`
  width: 9px;
  flex-shrink: 0;
`;

const HScroll = styled.div`
  height: 24px;
  display: flex;
  flex-shrink: 0;
`;

const VScroll = styled.div`
  width: 24px;
  display: flex;
  flex-direction: column;
  flex-shrink: 0;
`;

const ScrollButton = styled.div`
  ${raised}
  width: 24px;
  height: 24px;
  flex-shrink: 0;
  display: flex;
  align-items: center;
  justify-content: center;
`;

const arrows = {
  left: "border-width: 6px 6px 6px 0; border-right-color: #000;",
  right: "border-width: 6px 0 6px 6px; border-left-color: #000;",
  up: "border-width: 0 6px 6px; border-bottom-color: #000;",
  down: "border-width: 6px 6px 0; border-top-color: #000;",
};

const Arrow = styled.i<{ $dir: keyof typeof arrows }>`
  border: solid transparent;
  ${(p) => arrows[p.$dir]}
`;

const HThumb = styled.div<{ $width: number }>`
  ${raised}
  width: ${(p) => p.$width}px;
`;

const VThumb = styled.div`
  ${raised}
  height: 455px;
`;

const Track = styled.div<{ $grow?: number }>`
  flex: ${(p) => p.$grow || 1};
  background: repeating-conic-gradient(#fff 0 25%, ${face} 0 50%) 0 0 / 2px 2px;
`;

const Corner = styled.div`
  width: 24px;
  background: ${face};
`;

const IISPane = styled.div`
  flex: 1;
  min-width: 0;
  margin-left: 4px;
  display: flex;
  flex-direction: column;
  border-left: 1px solid ${shadow};
`;

const Banner = styled.div`
  height: 24px;
  flex-shrink: 0;
  padding: 1px 0 0 20px;
  background: ${dark};
  border-top: 1px solid ${shadow};
  border-bottom: 1px solid #fff;
  color: #fff;
  font-weight: 700;
  letter-spacing: 1px;
`;

const NavRow = styled.div`
  height: 35px;
  flex-shrink: 0;
  margin-top: 1px;
  display: flex;
  align-items: center;
  gap: 4px;
  padding: 0 5px 3px 4px;
  border-top: 1px solid ${dark};
  border-left: 1px solid ${dark};
`;

const Address = styled.div`
  width: 1324px;
  height: 25px;
  margin: 0 2px 0 13px;
  display: flex;
  align-items: center;
  padding-left: 5px;
  background: #f9f8f7;
  border: 1px solid ${shadow};
  border-radius: 3px;

  > svg {
    margin-right: -5px;
  }
`;

const Crumb = styled.i`
  width: 4px;
  margin: 0 12px;
  border: solid transparent;
  border-width: 4px 0 4px 4px;
  border-left-color: #000;
`;

const NavTools = styled.div`
  display: flex;
  align-items: center;
  gap: 7px;
`;

const NavHelp = styled.div`
  display: flex;
  align-items: center;
  gap: 3px;
`;

const Divider = styled.i<{ $height: number }>`
  width: 2px;
  height: ${(p) => p.$height}px;
  flex-shrink: 0;
  background: ${shadow};
`;

const Caret = styled.i`
  width: 6px;
  flex-shrink: 0;
  margin-left: 4px;
  border: solid transparent;
  border-width: 3px 3px 0;
  border-top-color: #000;
`;

const DimCaret = styled(Caret)`
  margin: 0 4px 0 11px;
  border-top-color: ${shadow};
`;

const ToolCaret = styled(Caret)`
  margin-left: 2px;
`;

const Columns = styled.div`
  flex: 1;
  min-height: 0;
  display: flex;
  border-left: 1px solid ${dark};
`;

const ConnBox = styled.div`
  width: 163px;
  height: 644px;
  display: flex;
  flex-direction: column;
  flex-shrink: 0;
  border: solid ${shadow};
  border-width: 0 1px 1px 0;
`;

const PanelHead = styled.div`
  height: 27px;
  flex-shrink: 0;
  padding: 4px 0 0 8px;
  background: ${shadow};
  font-weight: 700;
`;

const ConnTools = styled.div`
  height: 25px;
  flex-shrink: 0;
  display: flex;
  align-items: center;
  padding-left: 1px;
  background: linear-gradient(#fafaf9, #dddad4);
  border-bottom: 1px solid ${shadow};
`;

const ConnGap = styled.i<{ $width: number }>`
  width: ${(p) => p.$width}px;
`;

const ConnBody = styled.div`
  flex: 1;
  min-height: 0;
  display: flex;
`;

const ConnRows = styled.div`
  flex: 1;
  overflow: hidden;
  background: #fff;
`;

const SiteRow = styled.div`
  height: 20px;
  display: flex;
  align-items: center;
`;

const PlainLabel = styled.span`
  padding-left: 5px;
`;

const TopLabel = styled.span<{ $active?: boolean }>`
  height: 20px;
  margin-left: 2px;
  padding: 0 2px;
  ${(p) => p.$active && `background: ${navy}; color: #fff;`}
`;

const Stub = styled.i`
  width: 3px;
  height: 1px;
  margin-left: 1px;
  border-top: 1px dotted ${shadow};
`;

const GuidePad = styled.i`
  width: 3px;
  flex-shrink: 0;
`;

const Guide = styled.span<{ $kind: string }>`
  position: relative;
  width: 20px;
  height: 20px;
  flex-shrink: 0;
  display: flex;
  align-items: center;
  padding-left: 5px;

  &::before {
    content: "";
    position: absolute;
    left: 9px;
    top: 0;
    height: ${(p) => (p.$kind === "l" ? 10 : 20)}px;
    border-left: ${(p) => (p.$kind === " " ? "0" : `1px dotted ${shadow}`)};
  }

  &::after {
    content: "";
    position: absolute;
    left: 10px;
    right: -1px;
    top: 10px;
    border-top: ${(p) => ("tl".includes(p.$kind) ? `1px dotted ${shadow}` : "0")};
  }
`;

const NodeIcon = styled.span`
  margin-left: 1px;
`;

const Center = styled.div`
  width: 1138px;
  margin-left: 6px;
  flex-shrink: 0;
`;

const Content = styled.div`
  height: 615px;
  padding: 10px 12px 12px;
  background: #fff;
  border: 1px solid ${shadow};
`;

const PageTitle = styled.div`
  height: 40px;
  display: flex;
  align-items: center;

  > svg {
    margin: 0 0 3px -1px;
  }

  h1 {
    margin: 0 0 14px 17px;
    font-size: 25px;
    font-weight: 300;
    line-height: 30px;
  }
`;

const ListBox = styled.div`
  width: 1112px;
  height: 551px;
  display: flex;
  flex-direction: column;
  border: 1px solid #d0cec4;
`;

const FilterBar = styled.div`
  height: 32px;
  flex-shrink: 0;
  display: flex;
  align-items: center;
  padding-left: 7px;
  background: linear-gradient(#faf9f8, #e6e4df 60%, #d8d5ce);
  border-bottom: 1px solid ${shadow};
`;

const Combo = styled.div<{ $left: number }>`
  width: 122px;
  height: 27px;
  margin: 0 2px 0 ${(p) => p.$left}px;
  padding: 1px 1px 1px 5px;
  display: flex;
  align-items: center;
  background: #fff;
`;

const ComboArrow = styled.div`
  width: 18px;
  height: 25px;
  margin-left: auto;
  display: flex;
  align-items: center;
  justify-content: center;
  background: ${face};

  i {
    margin: 0;
  }
`;

const FilterItem = styled.div<{ $disabled?: boolean }>`
  display: flex;
  align-items: center;
  gap: 3px;
  color: ${(p) => (p.$disabled ? shadow : "#000")};
`;

const GroupSep = styled.i`
  width: 2px;
  height: 20px;
  margin: 0 5px 0 9px;
  background: ${shadow};
`;

const grid = css`
  display: grid;
  grid-template-columns: 272px 80px 80px 200px 225px 1fr;
`;

const HeaderRow = styled.div`
  ${grid}
  height: 24px;
  flex-shrink: 0;
`;

const HeadCell = styled.div`
  ${raised}
  display: flex;
  align-items: center;
  padding-left: 5px;

  &:last-child {
    border-right-color: ${face};
    box-shadow: inset 0 -1px 0 ${shadow};
  }
`;

const SortUp = styled.i`
  margin-left: 9px;
  border: solid transparent;
  border-width: 0 7px 7px;
  border-bottom-color: ${shadow};
`;

const ListBody = styled.div`
  flex: 1;
  padding-top: 1px;
  background: linear-gradient(90deg, #f7f7f7 272px, #fff 272px);
`;

const DataRow = styled.div`
  ${grid}
  height: 22px;
  align-items: center;
`;

const NameCell = styled.div`
  display: flex;
  align-items: center;
  gap: 2px;
  padding-left: 4px;
`;

const Cell = styled.div`
  padding-left: 6px;
`;

const Tabs = styled.div`
  display: flex;
  padding: 3px 0 0 6px;
`;

const Tab = styled.div<{ $active?: boolean }>`
  height: 22px;
  display: flex;
  align-items: center;
  gap: 3px;
  padding: 0 6px 0 1px;
  border: 1px solid ${(p) => (p.$active ? navy : "transparent")};
  background: ${(p) => (p.$active ? "#fff" : "transparent")};
`;

const ActionBox = styled.div`
  width: 199px;
  height: 644px;
  margin-left: 6px;
  display: flex;
  flex-direction: column;
  border: solid ${shadow};
  border-width: 0 1px 1px;
`;

const ActionBody = styled.div`
  flex: 1;
  padding: 4px 3px 0 5px;
  background: linear-gradient(90deg, #fff 5%, ${face} 98%);
`;

const ActionGroup = styled.div`
  display: flex;
  gap: 8px;

  > svg {
    margin-top: 2px;
  }
`;

const ActionLink = styled.div`
  height: 19.6px;
  color: #000080;
`;

const ActionRule = styled.div`
  height: 1px;
  margin: -1px 0 3px;
  background: linear-gradient(90deg, ${face}, #6a6a6a 25%);
`;

const StatusBar = styled.div`
  height: 30px;
  flex-shrink: 0;
  display: flex;
  gap: 2px;
  padding: 2px 1px 1px 0;
  border-bottom: 1px solid #fff;
`;

const StatusCell = styled.div<{ $width?: number }>`
  ${(p) => (p.$width ? `width: ${p.$width}px;` : "flex: 1;")}
  border: 1px solid;
  border-color: ${shadow} #fff #fff ${shadow};
`;

const TaskRow = styled.div`
  position: relative;
  flex: 1;
  display: flex;
  align-items: flex-start;
  padding: 3px 3px 0 2px;
`;

const StartButton = styled.div`
  ${raised}
  width: 68px;
  height: 55px;
  margin-top: -1px;
  display: flex;
  align-items: center;
  padding: 0 0 3px 1px;
`;

const Grip = styled.i`
  width: 3px;
  height: 50px;
  margin: 2px 0 0 8px;
  border: 1px solid;
  border-color: #fff ${shadow} ${shadow} #fff;
`;

const TaskButtons = styled.div`
  width: 1236px;
  padding-left: 11px;
  display: flex;
  gap: 2px;
`;

const looks = {
  raised,
  flat: css`
    border: 1px solid transparent;
  `,
  pressed: css`
    background: #fff;
    border: 1px solid;
    border-color: ${dark} #fff #fff ${dark};
    box-shadow: inset 1px 1px 0 ${shadow};
  `,
};

const TaskButton = styled.div<{ $look?: keyof typeof looks }>`
  width: 64px;
  height: 54px;
  display: flex;
  align-items: center;
  justify-content: center;
  ${(p) => looks[p.$look || "raised"]}
`;

const LangBar = styled.div`
  width: 130px;
  height: 50px;
  display: flex;
  align-items: center;
  padding: 0 0 0 15px;
  gap: 5px;

  > span {
    width: 20px;
    flex-shrink: 0;
  }
`;

const TraySep = styled.i`
  width: 2px;
  height: 30px;
  flex-shrink: 0;
  border-left: 1px solid ${shadow};
  border-right: 1px solid #fff;
`;

const LangOptions = styled.div`
  height: 20px;
  display: flex;
  flex-direction: column;
  justify-content: space-between;
  align-items: center;

  i {
    margin: 0;
  }
`;

const Tray = styled.div`
  width: 256px;
  height: 54px;
  display: flex;
  align-items: center;
  padding-left: 7px;
  border: 1px solid;
  border-color: ${shadow} #fff #fff ${shadow};
`;

const TrayIcons = styled.div`
  display: flex;
  gap: 11px;
  margin-left: 12px;
`;

const Clock = styled.div`
  width: 90px;
  margin-left: 11px;
  padding-top: 1px;
  display: flex;
  flex-direction: column;
  align-items: center;
  gap: 3px;
`;

const Watermark = styled.div`
  position: absolute;
  right: 12px;
  bottom: 5px;
  color: #fff;
  font-family: "Liberation Sans", sans-serif;
  font-size: 12px;
  font-weight: 400;
  line-height: 20px;
  text-shadow: 0 0 2px #555;
  opacity: 0.8;
`;

const Mark = styled.div<{ $x: number; $y: number; $w: number; $h: number }>`
  position: absolute;
  left: ${(p) => p.$x - 1}px;
  top: ${(p) => p.$y}px;
  width: ${(p) => p.$w}px;
  height: ${(p) => p.$h}px;
  z-index: 2;
  border: 4px solid #ff2012;
  border-radius: 4px;
`;

const Step = styled.div<{ $x: number; $y: number }>`
  position: absolute;
  left: ${(p) => p.$x - 1}px;
  top: ${(p) => p.$y}px;
  z-index: 2;
  color: #ff2012;
  font-family: "Open Sans", sans-serif;
  font-size: 27px;
  font-weight: 400;
  line-height: 36px;
`;
